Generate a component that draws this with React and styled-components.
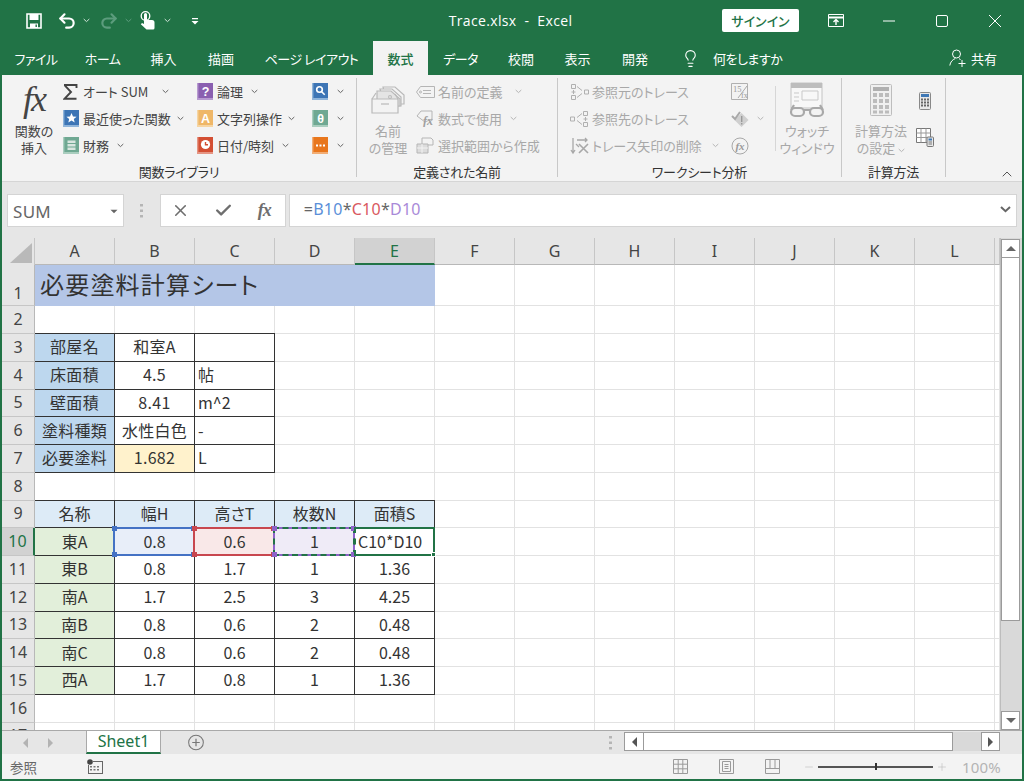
import React from 'react';
import styled, { createGlobalStyle } from 'styled-components';
import { Undo2, Redo2, Lightbulb, Check, X, Minus, Plus, ChevronUp } from 'lucide-react';

const GREEN = '#217346';
const UI = '"Noto Sans CJK JP", "Noto Sans", sans-serif';

const Global = createGlobalStyle`
  html, body { margin: 0; padding: 0; background: ${GREEN}; }
  body { font-family: ${UI}; font-feature-settings: "palt"; }
  * { box-sizing: border-box; }
`;

const Win = styled.div`
  width: 1024px; height: 781px; overflow: hidden; background: ${GREEN};
  padding: 0 2px 2px; display: flex; flex-direction: column;
`;

/* ---------- title bar ---------- */
const TitleBar = styled.div`
  height: 41px; flex: none; display: grid; grid-template-columns: 1fr auto 1fr; align-items: center; color: #fff;
`;
const Qat = styled.div`display: flex; align-items: center; padding-left: 24px;`;
const QatSlot = styled.span`display: flex; margin-left: ${p => p.$ml || 0}px; color: ${p => p.$dim ? '#5c9c7d' : '#fff'};`;
const Title = styled.div`font: 14px "Open Sans", sans-serif; white-space: pre; letter-spacing: .35px; margin-right: 3px;`;
const WinControls = styled.div`display: flex; align-items: center; justify-content: flex-end; padding-right: 1px;`;
const SignIn = styled.div`
  width: 77px; height: 23px; background: #fff; color: ${GREEN}; border-radius: 2px; font-size: 13px; font-weight: 500;
  display: flex; align-items: center; justify-content: center; margin-right: 10px;
`;
const WinBtn = styled.span`display: flex; width: 53px; justify-content: center; color: #fff;`;

/* ---------- tabs ---------- */
const TabRow = styled.div`height: 34px; flex: none; display: flex; align-items: stretch; color: #fff;`;
const Tab = styled.div`
  width: ${p => p.$w}px; display: flex; align-items: center; justify-content: center; white-space: nowrap;
  font-size: 13px; letter-spacing: ${p => p.$tight ? '-.5px' : '0'};
  ${p => p.$active ? `background:#f3f3f3;color:${GREEN};font-weight:500;` : ''}
`;
const TellMe = styled.div`display: flex; align-items: center; gap: 13px; margin-left: 17px; font-size: 13px; letter-spacing: -.5px;`;
const Share = styled.div`display: flex; align-items: center; gap: 5px; margin-left: auto; margin-right: 25px; font-size: 13px;`;

/* ---------- ribbon ---------- */
const Ribbon = styled.div`
  height: 107px; flex: none; background: #f3f3f3; border-bottom: 1px solid #d5d5d5; padding-top: 3px; display: flex; align-items: flex-start;
`;
const Group = styled.div`
  width: ${p => p.$w}px; height: 99px; flex: none; border-right: 1px solid #c8c8c8; display: flex; flex-direction: column;
`;
const GroupBody = styled.div`height: 82px; flex: none; display: flex; padding-left: ${p => p.$pl || 0}px;`;
const GroupLabel = styled.div`height: 24px; line-height: 24px; text-align: center; font-size: 13px; color: #333; white-space: nowrap; letter-spacing: -.2px;`;
const LargeBtn = styled.div`
  width: ${p => p.$w}px; flex: none; display: flex; flex-direction: column; align-items: center;
  color: ${p => p.$off ? '#a8a8a8' : '#444'};
`;
const LargeIcon = styled.div`height: 44px; display: flex; align-items: center; justify-content: center;`;
const LargeText = styled.div`font-size: 13px; line-height: 17px; text-align: center; white-space: nowrap;`;
const FxBig = styled.span`font: italic 36px "Liberation Serif", serif; color: #444; letter-spacing: -2px; line-height: 1; margin-bottom: 3px;`;
const Col = styled.div`width: ${p => p.$w}px; flex: none; display: flex; flex-direction: column;`;
const SideCol = styled.div`width: 18px; margin-left: -1px; flex: none; display: flex; flex-direction: column; align-items: center; padding-top: 14px; gap: 18px;`;
const SideIcon = styled.span`display: flex; height: 18px;`;
const Item = styled.div`
  height: 27px; display: flex; align-items: center; font-size: 13px; white-space: nowrap;
  color: ${p => p.$off ? '#a8a8a8' : '#444'};
`;
const Slot = styled.span`width: ${p => p.$w || 20}px; flex: none; display: flex; align-items: center;`;
const CaretWrap = styled.span`display: inline-flex; margin-left: ${p => p.$ml}px; vertical-align: middle;`;
const VSep = styled.div`width: 1px; height: 65px; margin-top: 8px; background: #d6d6d6; flex: none;`;
const Collapse = styled.div`margin-left: auto; margin-right: 7px; align-self: flex-end; margin-bottom: -1px; color: #555; display: flex;`;

/* ---------- formula bar ---------- */
const FormulaBar = styled.div`
  height: 56px; flex: none; background: #e6e6e6; display: flex; align-items: flex-start; padding: 12px 5px 0 5px; 
`;
const NameBox = styled.div`
  width: 117px; height: 33px; background: #fff; border: 1px solid #d4d4d4; display: flex; align-items: center; justify-content: space-between;
  padding: 2px 4px 0 5px; color: #666; font: 17px "Noto Sans", sans-serif; letter-spacing: .3px;
`;
const Dots = styled.div`width: 36px; height: 33px; display: flex; align-items: center; justify-content: center;`;
const FxButtons = styled.div`
  width: 126px; height: 33px; background: #fff; border: 1px solid #d4d4d4; display: flex; align-items: center; color: #6e6e6e;
  padding: 0 14px 0 10px; justify-content: space-between;
`;
const FxSmall = styled.span`font: italic bold 18px "Liberation Serif", serif; color: #6e6e6e; letter-spacing: -1px;`;
const FormulaInput = styled.div`
  width: 729px; margin-left: 3px; height: 33px; background: #fff; border: 1px solid #d4d4d4; display: flex; align-items: center; justify-content: space-between;
  padding: 0 5px 3px 14px; font: 16px "Noto Sans", sans-serif; letter-spacing: .25px;
`;
const Ref = styled.span`color: ${p => p.$c};`;

/* ---------- sheet ---------- */
const SheetArea = styled.div`flex: 1; min-height: 0; display: flex; background: #fff;`;
const Sheet = styled.div`
  flex: 1; min-width: 0; overflow: hidden; display: grid;
  grid-template-columns: 33px repeat(12, 80px) 1fr;
  grid-template-rows: 27px 41.25px repeat(17, 27.75px);
  font-size: 16px; color: #333;
`;
const Corner = styled.div`background: #e6e6e6; border-right: 1px solid #c6c6c6; display: flex; align-items: flex-end; justify-content: flex-end; padding: 0 2px 2px 0;`;
const ColHead = styled.div`
  display: flex; align-items: center; justify-content: center; font: 16px "Noto Sans", sans-serif;
  background: ${p => p.$active ? '#d2d2d2' : '#e6e6e6'}; color: ${p => p.$active ? GREEN : '#444'};
  border-right: 1px solid #c6c6c6; border-bottom: ${p => p.$active ? `2px solid ${GREEN}` : '1px solid #b8b8b8'};
`;
const RowHead = styled.div`
  display: flex; align-items: ${p => p.$tall ? 'flex-end' : 'center'}; justify-content: center; font: 16px "Noto Sans", sans-serif;
  background: ${p => p.$active ? '#d2d2d2' : '#e6e6e6'}; color: ${p => p.$active ? GREEN : '#444'};
  border-bottom: 1px solid #c6c6c6; padding-bottom: 1px;
  border-right: ${p => p.$active ? `2px solid ${GREEN}` : '1px solid #b8b8b8'};
`;
const Cell = styled.div`
  position: relative; display: flex; align-items: center; white-space: nowrap;
  justify-content: ${p => p.$align === 'left' ? 'flex-start' : 'center'};
  padding-left: ${p => p.$align === 'left' ? '3px' : '0'}; padding-bottom: 2px;
  background: ${p => p.$bg || '#fff'};
  border-right: 1px solid ${p => p.$box ? '#333' : '#e2e2e2'};
  border-bottom: 1px solid ${p => p.$box ? '#333' : '#e2e2e2'};
  ${p => p.$top ? 'box-shadow: 0 -1px 0 #333; z-index: 1;' : ''}
  letter-spacing: ${p => p.$cjk ? '.3px' : '0'};
`;
const TitleCell = styled.div`
  grid-column: span 5; background: #b4c6e7; display: flex; align-items: center; padding: 0 0 4px 5px; font-size: 24px; letter-spacing: 1.2px; color: #333;
`;
const Marker = styled.div`
  position: absolute; inset: -1px -1px -1px -2px; border: 2px solid ${p => p.$c}; z-index: 3; pointer-events: none;
`;
const Ants = styled.div`position: absolute; inset: -2px; border: 2px dashed ${GREEN};`;
const EditFrame = styled.div`
  position: absolute; inset: -1px -1px -1px -1px; z-index: 4; pointer-events: none;
  border: 2px solid ${GREEN}; border-left: 2px dashed ${GREEN};
`;
const Handle = styled.i`
  position: absolute; width: 5px; height: 5px; background: ${p => p.$c}; z-index: 5;
  ${p => p.$y}: -3px; ${p => p.$x}: -3px;
`;
const FillHandle = styled.i`position: absolute; right: -3px; bottom: -3px; width: 5px; height: 5px; background: ${GREEN}; border: 1px solid #fff;`;

/* ---------- scrollbars ---------- */
const VScroll = styled.div`
  width: 22px; flex: none; background: #d9d9d9; border-left: 1px solid #bdbdbd; display: flex; flex-direction: column; padding: 1px 2px 0 0;
`;
const ScrollBtn = styled.div`
  width: ${p => p.$w || 19}px; height: ${p => p.$h || 19}px; flex: none; background: #fff; border: 1px solid #9b9b9b; display: flex; align-items: center; justify-content: center; color: #555;
`;
const VThumb = styled.div`height: 363px; flex: none; background: #fff; border: 1px solid #9b9b9b; border-top: 0; width: 19px;`;
const VTrack = styled.div`flex: 1;`;
const Arrow = styled.i`
  width: 0; height: 0; display: block;
  ${p => p.$dir === 'up' ? 'border-left:5px solid transparent;border-right:5px solid transparent;border-bottom:5px solid #666;' : ''}
  ${p => p.$dir === 'down' ? 'border-left:5px solid transparent;border-right:5px solid transparent;border-top:5px solid #666;' : ''}
  ${p => p.$dir === 'left' ? 'border-top:5px solid transparent;border-bottom:5px solid transparent;border-right:5px solid #555;' : ''}
  ${p => p.$dir === 'right' ? 'border-top:5px solid transparent;border-bottom:5px solid transparent;border-left:5px solid #555;' : ''}
`;
const SmallArrow = styled(Arrow)`transform: scale(.7);`;

const TabBar = styled.div`
  height: 24px; flex: none; background: #e6e6e6; border-top: 1px solid #a9a9a9; display: flex; align-items: flex-start;
`;
const NavArrows = styled.div`width: 84px; height: 23px; flex: none; display: flex; align-items: center; gap: 20px; padding-left: 21px; opacity: .35;`;
const SheetTab = styled.div`
  width: 75px; height: 24px; margin-top: -1px; flex: none; background: #fff; color: ${GREEN}; font: 16px "Noto Sans", sans-serif; display: flex; align-items: center; justify-content: center;
  border: 1px solid #a9a9a9; border-bottom: 2px solid ${GREEN}; padding-bottom: 2px;
`;
const AddSheet = styled.div`margin-left: 27px; height: 23px; width: 16px; display: flex; align-items: center; color: #777;`;
const GripWrap = styled.div`margin-left: auto; width: 22px; height: 23px; display: flex; align-items: center; justify-content: center; margin-right: 3px;`;
const HScroll = styled.div`width: 376px; height: 19px; margin-top: 1px; margin-right: 22px; flex: none; background: #d9d9d9; display: flex; justify-content: space-between;`;
const HLeft = styled.div`display: flex;`;
const HThumb = styled.div`width: 309px; height: 19px; background: #fff; border: 1px solid #9b9b9b; border-left: 0;`;

const StatusBar = styled.div`
  height: 25px; flex: none; background: #f3f3f3; display: flex; align-items: center; padding-left: 8px; font-size: 13.5px; color: #666;
`;
const MacroIcon = styled.span`display: flex; margin-left: 50px;`;
const ViewBtns = styled.div`display: flex; gap: 31px; margin-left: auto; margin-right: -4px; color: #999;`;
const ZoomBar = styled.div`display: flex; align-items: center; margin-left: 27px; color: #bdbdbd;`;
const SliderLine = styled.div`width: 115px; height: 2px; background: #555; margin: 0 3px; display: flex; justify-content: center; align-items: center;`;
const SliderTick = styled.i`width: 2px; height: 7px; background: #333; display: block;`;
const ZoomPct = styled.div`font: 15px "Noto Sans", sans-serif; color: #b4b4b4; width: 60px; margin-left: 14px; letter-spacing: .2px;`;

/* ---------- icons ---------- */
const Caret = ({ c = '#666', w = 7 }) => (
  <svg width={w} height="5" viewBox="0 0 7 5"><path d="M.7 1l2.8 2.6L6.3 1" fill="none" stroke={c} strokeWidth="1" /></svg>
);
const SaveIcon = () => (
  <svg width="16" height="16" viewBox="0 0 16 16" fill="none">
    <path d="M1 1h14v14H1z" stroke="#fff" strokeWidth="1.6" />
    <path d="M3.5 1v6h9V1" fill="#fff" /><path d="M4 10.5h8V15H4z" fill="#fff" /><path d="M9.5 11.5h1.4V14H9.5z" fill={GREEN} />
  </svg>
);
const HandIcon = () => (
  <svg width="15" height="19" viewBox="0 0 15 19">
    <circle cx="5.500" cy="5" r="4.300" fill="none" stroke="#fff" strokeWidth="1.300" />
    <path d="M4 3.500a1.500 1.500 0 0 1 3 0V9h5a2.500 2.500 0 0 1 2.500 2.500V17a1.500 1.500 0 0 1-1.500 1.500H6.500L.8 13.200l1.200-1.200 2 1z" fill="#fff" />
  </svg>
);
const CustomIcon = () => (
  <svg width="8" height="8" viewBox="0 0 8 8"><path d="M1 1h6v1.2H1z M.5 4h7L4 7.6z" fill="#fff" /></svg>
);
const RibbonDisplay = () => (
  <svg width="16" height="13" viewBox="0 0 16 13" fill="none" stroke="#fff"><path d="M.5.5h15v12H.5z" /><path d="M.5 3.5h15" strokeWidth="2" /><path d="M8 11V5.5M5.5 8L8 5.5 10.5 8" strokeWidth="1.4" /></svg>
);
const MinIcon = () => <svg width="12" height="12" viewBox="0 0 12 12"><path d="M0 6h12" stroke="#fff" /></svg>;
const MaxIcon = () => <svg width="12" height="12" viewBox="0 0 12 12" fill="none"><rect x=".5" y=".5" width="11" height="11" rx="1.5" stroke="#fff" /></svg>;
const CloseIcon = () => <svg width="12" height="12" viewBox="0 0 12 12"><path d="M0 0l12 12M12 0L0 12" stroke="#fff" /></svg>;
const PersonIcon = () => (
  <svg width="17" height="18" viewBox="0 0 17 18" fill="none" stroke="#fff"><circle cx="7.5" cy="5" r="4" /><path d="M.8 16.5c.5-3.5 2.8-6 5.5-7M10 9.5c.6.4 1.2.8 1.6 1.4M9.5 14.5h7M13 11v7" /></svg>
);
const Book = ({ c, light, glyph, dots, star, stack, clock, size = 16 }) => (
  <svg width={size} height={size + 1} viewBox="0 0 16 17">
    <rect x="0" y="0" width="16" height="16" fill={c} />
    <rect x="0" y="0" width="1.4" height="17" fill={light} />
    <rect x="1" y="15" width="15" height="2" fill={light} />
    {glyph && <text x="8.6" y="12.5" textAnchor="middle" fontFamily="Liberation Sans" fontWeight="700" fontSize="12.5" fill="#fff">{glyph}</text>}
    {star && <path d="M8.5 3l1.5 3.4 3.6.3-2.8 2.3.9 3.5-3.2-1.9-3.2 1.9.9-3.5-2.8-2.3 3.6-.3z" fill="#fff" />}
    {dots && <path d="M4 7.5h2v2H4zM7.5 7.5h2v2h-2zM11 7.5h2v2h-2z" fill="#fff" />}
    {stack && <path d="M4.5 3.5h8v2.5h-8zM4.5 7h8v2.5h-8zM4.5 10.5h8v2.5h-8z" fill="#d8e6df" />}
    {clock && <g><circle cx="8.5" cy="7.5" r="4.6" fill="#fff" /><path d="M8.5 5v2.8h2.5" fill="none" stroke={c} strokeWidth="1.4" /></g>}
    {!glyph && !star && !dots && !stack && !clock && <g fill="none" stroke="#fff" strokeWidth="1.6"><circle cx="7.5" cy="6.5" r="2.8" /><path d="M9.7 8.7l3 3" /></g>}
  </svg>
);
const Sigma = () => <svg width="15" height="16" viewBox="0 0 15 16"><path d="M1 1h12.5v3M13.5 14.8H1.5L8 8 1.5 1.2" fill="none" stroke="#444" strokeWidth="1.9" /></svg>;
const NameMgr = () => (
  <svg width="34" height="28" viewBox="0 0 34 28" fill="#f3f3f3" stroke="#b9b9b9" strokeWidth="1.2">
    <path d="M12 1h12l9 8v9H16z" /><path d="M9 3h12l9 8v9H14z" /><path d="M6 5h14l9 8v7H6z" fill="#e4e4e4" />
    <circle cx="19" cy="11" r="1.4" fill="#fff" />
    <path d="M1 13h26v14H1z" fill="#f3f3f3" /><path d="M1 13l4-6M27 13l-3-5" /><path d="M10 18h8" />
  </svg>
);
const TagIcon = () => (
  <svg width="19" height="12" viewBox="0 0 19 12" fill="none" stroke="#b5b5b5"><path d="M4.5.5h14v11h-14L.5 6z" /><path d="M7 4.5h8M7 7.5h8" /><circle cx="4.5" cy="6" r="1" /></svg>
);
const UseInFormula = () => (
  <svg width="17" height="17" viewBox="0 0 17 17" fill="none" stroke="#b5b5b5"><path d="M5 1h11v8L9 12 1 6z" /><text x="7" y="15" stroke="none" fill="#a0a0a0" fontSize="12" fontStyle="italic" fontWeight="700" fontFamily="Liberation Serif">fx</text></svg>
);
const FromSelection = () => (
  <svg width="18" height="17" viewBox="0 0 18 17" fill="none" stroke="#b5b5b5"><path d="M6 1h9l2 2v5H6z" /><path d="M1 7h11v9H1z" fill="#dcdcdc" /><path d="M1 11h11M6 7v9" stroke="#f3f3f3" /></svg>
);
const FlipWrap = styled.span`display: flex; transform: ${p => p.$flip ? 'scaleX(-1)' : 'none'};`;
const TracePre = ({ flip }) => (
  <FlipWrap $flip={flip}>
    <svg width="19" height="18" viewBox="0 0 19 18" fill="none" stroke="#b0b0b0">
      <path d="M1.5 1.5h4v4h-4zM1.5 12.5h4v4h-4zM14.500 7h4v4h-4z" /><path d="M1.500 9h4M3.500 7v4" /><path d="M7 3.500l5 4M7 14.500l5-4" />
    </svg>
  </FlipWrap>
);
const TraceRemove = () => (
  <svg width="20" height="18" viewBox="0 0 20 18" fill="none" stroke="#a8a8a8" strokeWidth="1.3"><path d="M3 1v14M1 13l2 3 2-3M7 3h10M15 1l2 2-2 2" /><path d="M9 7l9 9M18 7l-9 9" strokeWidth="1.6" /><path d="M6 7l3 3" /></svg>
);
const ShowFormula = () => (
  <svg width="18" height="18" viewBox="0 0 18 18"><path d="M.5.5h16v16H.5z" fill="#f3f3f3" stroke="#b0b0b0" /><text x="2" y="9" fontSize="8.500" fill="#999" fontFamily="Liberation Serif">15</text><path d="M7 15L16 3" stroke="#aaa" /><text x="10" y="15" fontSize="8" fill="#999" fontFamily="Liberation Serif">fx</text></svg>
);
const ErrCheck = () => (
  <svg width="18" height="18" viewBox="0 0 18 18"><path d="M10.500 3l7 7-7 7-7-7z" fill="#cfcfcf" /><path d="M10 6h1.400v6H10zM10 13h1.400v1.500H10z" fill="#999" /><path d="M1 6l3 3 5-7" fill="none" stroke="#a8a8a8" strokeWidth="2" /></svg>
);
const EvalIcon = () => (
  <svg width="18" height="18" viewBox="0 0 18 18"><circle cx="9" cy="9" r="8" fill="none" stroke="#a8a8a8" /><text x="9" y="13" textAnchor="middle" fontSize="11" fontStyle="italic" fontWeight="700" fill="#999" fontFamily="Liberation Serif">fx</text></svg>
);
const WatchIcon = () => (
  <svg width="36" height="36" viewBox="0 0 36 36" fill="none">
    <path d="M2 1h31v25H2z" fill="#f8f8f8" stroke="#c4c4c4" /><path d="M2 1h31v5H2z" fill="#bdbdbd" />
    <path d="M13 9h16v9H13z" stroke="#c9c9c9" /><path d="M5 11h5M5 15h5M5 19h5" stroke="#c9c9c9" />
    <g stroke="#a9a9a9" strokeWidth="2.200" fill="#f3f3f3"><rect x="2" y="26" width="13" height="8" rx="4" /><rect x="21" y="26" width="13" height="8" rx="4" /><path d="M15 28h6M2 28L5 23M34 28l-3-5" /></g>
  </svg>
);
const CalcLarge = () => (
  <svg width="22" height="32" viewBox="0 0 22 32">
    <rect x=".5" y=".5" width="21" height="31" rx="1" fill="#f0f0f0" stroke="#bdbdbd" />
    <rect x="3" y="3" width="16" height="4" fill="#b0b0b0" />
    <path d="M3 9h4v4H3zM9 9h4v4H9zM15 9h4v4h-4zM3 15h4v4H3zM9 15h4v4H9zM15 15h4v4h-4zM3 21h4v4H3zM9 21h4v4H9zM15 21h4v4h-4zM3 26.500h4v3H3zM9 26.500h4v3H9zM15 26.500h4v3h-4z" fill="#bcbcbc" />
  </svg>
);
const CalcSmall = () => (
  <svg width="12" height="18" viewBox="0 0 12 18">
    <rect x=".5" y=".5" width="11" height="17" rx="1" fill="#e8e8e8" stroke="#888" />
    <rect x="2" y="2" width="8" height="3" fill="#3f78b5" />
    <path d="M2 6.500h2v2H2zM5 6.500h2v2H5zM8 6.500h2v2H8zM2 9.500h2v2H2zM5 9.500h2v2H5zM8 9.500h2v2H8zM2 12.500h2v2H2zM5 12.500h2v2H5zM8 12.500h2v2H8z" fill="#666" />
  </svg>
);
const CalcSheet = () => (
  <svg width="18" height="19" viewBox="0 0 18 19" fill="none">
    <path d="M.5.5h14v14H.5z" fill="#fff" stroke="#777" /><path d="M.5 5h14M.5 9.500h14M5 .5v14M10 .5v14" stroke="#999" />
    <rect x="11" y="9" width="6.500" height="9.500" rx="1" fill="#e8e8e8" stroke="#777" /><rect x="12.500" y="10.500" width="3.500" height="2" fill="#3f78b5" /><path d="M12.500 14h3.500M12.500 16h3.500" stroke="#777" />
  </svg>
);
const Triangle = () => <svg width="22" height="20" viewBox="0 0 22 20"><path d="M22 0v20H0z" fill="#b9b9b9" /></svg>;
const Grip = () => <svg width="3" height="14" viewBox="0 0 3 14"><path d="M0 0h3v2.500H0zM0 5.500h3V8H0zM0 11h3v2.500H0z" fill="#b5b5b5" /></svg>;
const AddCircle = () => (
  <svg width="17" height="17" viewBox="0 0 17 17" fill="none" stroke="#777"><circle cx="8.500" cy="8.500" r="7.800" strokeWidth="1.100" /><path d="M8.500 4.500v8M4.500 8.500h8" strokeWidth="1.300" /></svg>
);
const MacroRec = () => (
  <svg width="16" height="15" viewBox="0 0 16 15"><circle cx="3" cy="3" r="2.800" fill="#444" /><path d="M6 2h10v13H1V6h1v8h13V3H6z" fill="#666" /><path d="M3 7h2v1.500H3zM6.500 7h2v1.500h-2zM10 7h2v1.500h-2zM3 10h2v1.500H3zM6.500 10h2v1.500h-2zM10 10h2v1.500h-2z" fill="#777" /></svg>
);
const ViewNormal = () => <svg width="15" height="15" viewBox="0 0 15 15" fill="none" stroke="#9a9a9a"><path d="M.5.5h14v14H.5zM.5 5.200h14M.5 9.800h14M5.200.5v14M9.800.5v14" /></svg>;
const ViewPage = () => <svg width="15" height="15" viewBox="0 0 15 15" fill="none" stroke="#9a9a9a"><path d="M.5.5h14v14H.5z" /><path d="M3.500 2.500h8v10h-8zM5.500 5.500h4M5.500 7.500h4M5.500 9.500h4" /></svg>;
const ViewBreak = () => <svg width="15" height="15" viewBox="0 0 15 15" fill="none" stroke="#9a9a9a"><path d="M.5.5h14v14H.5zM.5 9.500h14M5 .5v9M10 .5v9" /></svg>;

/* ---------- data ---------- */
const TABS = [
  { t: 'ファイル', w: 68, tight: true }, { t: 'ホーム', w: 65, tight: true }, { t: '挿入', w: 57 }, { t: '描画', w: 58 },
  { t: 'ページ レイアウト', w: 123, tight: true }, { t: '数式', w: 55, active: true }, { t: 'データ', w: 65, tight: true },
  { t: '校閲', w: 56 }, { t: '表示', w: 57 }, { t: '開発', w: 58 },
];
const COLS = ['A', 'B', 'C', 'D', 'E', 'F', 'G', 'H', 'I', 'J', 'K', 'L', ''];

const C_BLUE = '#bdd7ee', C_HEAD = '#ddebf7', C_GREEN = '#e2efda';
const info = [
  ['部屋名', '和室A', ''], ['床面積', '4.5', '帖'], ['壁面積', '8.41', 'm^2'], ['塗料種類', '水性白色', '-'], ['必要塗料', '1.682', 'L'],
];
const table = [
  ['東B', '0.8', '1.7', '1', '1.36'], ['南A', '1.7', '2.5', '3', '4.25'], ['南B', '0.8', '0.6', '2', '0.48'],
  ['南C', '0.8', '0.6', '2', '0.48'], ['西A', '1.7', '0.8', '1', '1.36'],
];

const Blank = ({ n }) => Array.from({ length: n }, (_, i) => <Cell key={i} />);

const RefFrame = ({ c, ants }) => (
  <Marker $c={c}>
    {ants && <Ants />}
    <Handle $c={c} $x="left" $y="top" /><Handle $c={c} $x="right" $y="top" />
    <Handle $c={c} $x="left" $y="bottom" /><Handle $c={c} $x="right" $y="bottom" />
  </Marker>
);

const SheetGrid = () => {
  const rows = [];
  const push = (n, content, opts = {}) => rows.push(
    <React.Fragment key={n}>
      <RowHead $tall={opts.tall} $active={opts.active}>{n}</RowHead>
      {content}
    </React.Fragment>
  );
  push(1, <><TitleCell>必要塗料計算シート</TitleCell><Blank n={8} /></>, { tall: true });
  push(2, <Blank n={13} />);
  info.forEach((r, i) => push(3 + i, <>
    <Cell $bg={C_BLUE} $box $cjk $top={i === 0}>{r[0]}</Cell>
    <Cell $box $cjk $top={i === 0} $bg={i === 4 ? '#fff2cc' : undefined}>{r[1]}</Cell>
    <Cell $box $top={i === 0} $align="left">{r[2]}</Cell>
    <Blank n={10} />
  </>));
  push(8, <Blank n={13} />);
  push(9, <>
    {['名称', '幅H', '高さT', '枚数N', '面積S'].map(t => <Cell key={t} $bg={C_HEAD} $box $top>{t}</Cell>)}
    <Blank n={8} />
  </>);
  push(10, <>
    <Cell $bg={C_GREEN} $box>東A</Cell>
    <Cell $bg="#e8eef9" $box>0.8<RefFrame c="#4472c4" /></Cell>
    <Cell $bg="#f9e8e8" $box>0.6<RefFrame c="#c8474f" /></Cell>
    <Cell $bg="#efebf7" $box>1<RefFrame c="#8e63c9" ants /></Cell>
    <Cell $box $align="left">C10*D10<EditFrame><FillHandle /></EditFrame></Cell>
    <Blank n={8} />
  </>, { active: true });
  table.forEach((r, i) => push(11 + i, <>
    <Cell $bg={C_GREEN} $box>{r[0]}</Cell>
    {r.slice(1).map((v, j) => <Cell key={j} $box>{v}</Cell>)}
    <Blank n={8} />
  </>));
  push(16, <Blank n={13} />);
  push(17, <Blank n={13} />);
  return (
    <Sheet>
      <Corner><Triangle /></Corner>
      {COLS.map((c, i) => <ColHead key={i} $active={c === 'E'}>{c}</ColHead>)}
      {rows}
    </Sheet>
  );
};

const RItem = ({ icon, slot, label, caret, off }) => (
  <Item $off={off}>
    <Slot $w={slot}>{icon}</Slot>
    {label}
    {caret !== undefined && <CaretWrap $ml={caret}><Caret c={off ? '#b5b5b5' : '#666'} /></CaretWrap>}
  </Item>
);

export default function App() {
  return (
    <Win>
      <Global />
      <TitleBar>
        <Qat>
          <QatSlot><SaveIcon /></QatSlot>
          <QatSlot $ml={15}><Undo2 size={20} strokeWidth={2.6} /></QatSlot>
          <QatSlot $ml={6}><Caret c="#cfe3d8" /></QatSlot>
          <QatSlot $ml={9} $dim><Redo2 size={20} strokeWidth={2.6} /></QatSlot>
          <QatSlot $ml={6} $dim><Caret c="#5c9c7d" /></QatSlot>
          <QatSlot $ml={8}><HandIcon /></QatSlot>
          <QatSlot $ml={9}><Caret c="#cfe3d8" /></QatSlot>
          <QatSlot $ml={20}><CustomIcon /></QatSlot>
        </Qat>
        <Title>Trace.xlsx  -  Excel</Title>
        <WinControls>
          <SignIn>サインイン</SignIn>
          <WinBtn><RibbonDisplay /></WinBtn>
          <WinBtn><MinIcon /></WinBtn>
          <WinBtn><MaxIcon /></WinBtn>
          <WinBtn><CloseIcon /></WinBtn>
        </WinControls>
      </TitleBar>

      <TabRow>
        {TABS.map(({ t, w, active, tight }) => <Tab key={t} $w={w} $active={active} $tight={tight}>{t}</Tab>)}
        <TellMe><Lightbulb size={19} strokeWidth={1.4} />何をしますか</TellMe>
        <Share><PersonIcon />共有</Share>
      </TabRow>

      <Ribbon>
        <Group $w={355}>
          <GroupBody $pl={3}>
            <LargeBtn $w={58}>
              <LargeIcon><FxBig>fx</FxBig></LargeIcon>
              <LargeText>関数の<br />挿入</LargeText>
            </LargeBtn>
            <Col $w={134}>
              <RItem icon={<Sigma />} label="オート SUM" caret={14} />
              <RItem icon={<Book c="#3d75b5" light="#8fb4da" star />} label="最近使った関数" caret={6} />
              <RItem icon={<Book c="#6fa892" light="#a9cdbe" stack />} label="財務" caret={8} />
            </Col>
            <Col $w={115}>
              <RItem icon={<Book c="#8a5fb0" light="#b79ad0" glyph="?" />} label="論理" caret={8} />
              <RItem icon={<Book c="#efb768" light="#f6d5a3" glyph="A" />} label="文字列操作" caret={6} />
              <RItem icon={<Book c="#d34f33" light="#e59583" clock />} label="日付/時刻" caret={8} />
            </Col>
            <Col $w={45}>
              <RItem icon={<Book c="#3d75b5" light="#8fb4da" />} slot={25} label="" caret={0} />
              <RItem icon={<Book c="#6fa892" light="#a9cdbe" glyph="θ" />} slot={25} label="" caret={0} />
              <RItem icon={<Book c="#e8761c" light="#f2ad74" dots />} slot={25} label="" caret={0} />
            </Col>
          </GroupBody>
          <GroupLabel>関数ライブラリ</GroupLabel>
        </Group>

        <Group $w={201}>
          <GroupBody $pl={3}>
            <LargeBtn $w={56} $off>
              <LargeIcon><NameMgr /></LargeIcon>
              <LargeText>名前<br />の管理</LargeText>
            </LargeBtn>
            <Col $w={140}>
              <RItem off icon={<TagIcon />} slot={22} label="名前の定義" caret={12} />
              <RItem off icon={<UseInFormula />} slot={22} label="数式で使用" caret={8} />
              <RItem off icon={<FromSelection />} slot={22} label="選択範囲から作成" />
            </Col>
          </GroupBody>
          <GroupLabel>定義された名前</GroupLabel>
        </Group>

        <Group $w={284}>
          <GroupBody $pl={12}>
            <Col $w={161}>
              <RItem off icon={<TracePre />} slot={22} label="参照元のトレース" />
              <RItem off icon={<TracePre flip />} slot={22} label="参照先のトレース" />
              <RItem off icon={<TraceRemove />} slot={22} label="トレース矢印の削除" caret={10} />
            </Col>
            <Col $w={44}>
              <RItem off icon={<ShowFormula />} slot={26} label="" />
              <RItem off icon={<ErrCheck />} slot={26} label="" caret={0} />
              <RItem off icon={<EvalIcon />} slot={26} label="" />
            </Col>
            <VSep />
            <LargeBtn $w={62} $off>
              <LargeIcon><WatchIcon /></LargeIcon>
              <LargeText>ウォッチ<br />ウィンドウ</LargeText>
            </LargeBtn>
          </GroupBody>
          <GroupLabel>ワークシート分析</GroupLabel>
        </Group>

        <Group $w={104}>
          <GroupBody $pl={3}>
            <LargeBtn $w={72} $off>
              <LargeIcon><CalcLarge /></LargeIcon>
              <LargeText>計算方法<br />の設定 <Caret c="#b5b5b5" /></LargeText>
            </LargeBtn>
            <SideCol>
              <SideIcon><CalcSmall /></SideIcon>
              <SideIcon><CalcSheet /></SideIcon>
            </SideCol>
          </GroupBody>
          <GroupLabel>計算方法</GroupLabel>
        </Group>

        <Collapse><ChevronUp size={16} strokeWidth={1.5} /></Collapse>
      </Ribbon>

      <FormulaBar>
        <NameBox>SUM<SmallArrow $dir="down" /></NameBox>
        <Dots><Grip /></Dots>
        <FxButtons>
          <X size={19} strokeWidth={2} />
          <Check size={19} strokeWidth={3} />
          <FxSmall>fx</FxSmall>
        </FxButtons>
        <FormulaInput>
          <span>
            <Ref $c="#666">=</Ref><Ref $c="#5b8fd9">B10</Ref><Ref $c="#666">*</Ref><Ref $c="#d9595f">C10</Ref><Ref $c="#666">*</Ref><Ref $c="#a98ad8">D10</Ref>
          </span>
          <svg width="11" height="7" viewBox="0 0 11 7"><path d="M1 1l4.500 4.200L10 1" fill="none" stroke="#666" strokeWidth="2" /></svg>
        </FormulaInput>
      </FormulaBar>

      <SheetArea>
        <SheetGrid />
        <VScroll>
          <ScrollBtn><Arrow $dir="up" /></ScrollBtn>
          <VThumb />
          <VTrack />
          <ScrollBtn><Arrow $dir="down" /></ScrollBtn>
        </VScroll>
      </SheetArea>

      <TabBar>
        <NavArrows><Arrow $dir="left" /><Arrow $dir="right" /></NavArrows>
        <SheetTab>Sheet1</SheetTab>
        <AddSheet><AddCircle /></AddSheet>
        <GripWrap><Grip /></GripWrap>
        <HScroll>
          <HLeft>
            <ScrollBtn $w={20}><Arrow $dir="left" /></ScrollBtn>
            <HThumb />
          </HLeft>
          <ScrollBtn><Arrow $dir="right" /></ScrollBtn>
        </HScroll>
      </TabBar>

      <StatusBar>
        参照
        <MacroIcon><MacroRec /></MacroIcon>
        <ViewBtns><ViewNormal /><ViewPage /><ViewBreak /></ViewBtns>
        <ZoomBar>
          <Minus size={12} strokeWidth={1.2} />
          <SliderLine><SliderTick /></SliderLine>
          <Plus size={12} strokeWidth={1.2} />
        </ZoomBar>
        <ZoomPct>100%</ZoomPct>
      </StatusBar>
    </Win>
  );
}
